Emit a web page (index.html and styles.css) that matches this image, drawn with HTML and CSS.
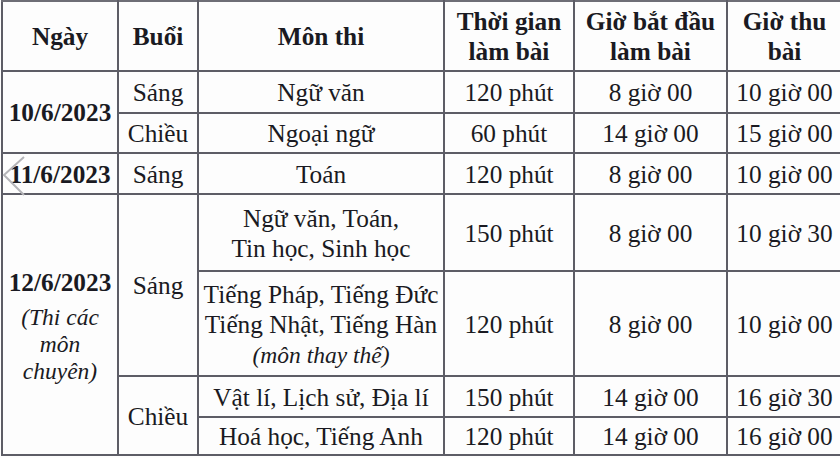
FILE: index.html
```html
<!DOCTYPE html>
<html lang="vi">
<head>
<meta charset="utf-8">
<title>Lịch thi</title>
<link rel="stylesheet" href="styles.css">
</head>
<body>
<div class="wrap">
<table class="schedule">
  <colgroup>
    <col class="c-day"><col class="c-session"><col class="c-subject"><col class="c-dur"><col class="c-start"><col class="c-end">
  </colgroup>
  <tr class="r-head">
    <th>Ngày</th><th>Buổi</th><th>Môn thi</th><th>Thời gian<br>làm bài</th><th>Giờ bắt đầu<br>làm bài</th><th>Giờ thu<br>bài</th>
  </tr>
  <tr class="r-a">
    <td rowspan="2" class="day">10/6/2023</td><td>Sáng</td><td>Ngữ văn</td><td>120 phút</td><td>8 giờ 00</td><td>10 giờ 00</td>
  </tr>
  <tr class="r-b">
    <td>Chiều</td><td>Ngoại ngữ</td><td>60 phút</td><td>14 giờ 00</td><td>15 giờ 00</td>
  </tr>
  <tr class="r-c">
    <td class="day">11/6/2023</td><td>Sáng</td><td>Toán</td><td>120 phút</td><td>8 giờ 00</td><td>10 giờ 00</td>
  </tr>
  <tr class="r-d">
    <td rowspan="4" class="day"><div class="date">12/6/2023</div><div class="note">(Thi các<br>môn<br>chuyên)</div></td>
    <td rowspan="2">Sáng</td><td class="multi">Ngữ văn, Toán,<br>Tin học, Sinh học</td><td>150 phút</td><td>8 giờ 00</td><td>10 giờ 30</td>
  </tr>
  <tr class="r-e">
    <td class="multi">Tiếng Pháp, Tiếng Đức<br>Tiếng Nhật, Tiếng Hàn<br><span class="alt">(môn thay thế)</span></td><td>120 phút</td><td>8 giờ 00</td><td>10 giờ 00</td>
  </tr>
  <tr class="r-f">
    <td rowspan="2">Chiều</td><td>Vật lí, Lịch sử, Địa lí</td><td>150 phút</td><td>14 giờ 00</td><td>16 giờ 30</td>
  </tr>
  <tr class="r-g">
    <td>Hoá học, Tiếng Anh</td><td>120 phút</td><td>14 giờ 00</td><td>16 giờ 00</td>
  </tr>
</table>
<svg class="nav-prev" width="26" height="42" viewBox="0 0 26 42" aria-hidden="true">
  <polyline points="22,2 2,20 22,40" fill="none" stroke="#b4b4b8" stroke-width="2"/>
</svg>
</div>
</body>
</html>
```

FILE: styles.css
```css
html, body {
  margin: 0;
  padding: 0;
  background: #fdfdfd;
  overflow: hidden;
}
.wrap {
  position: relative;
  padding: 0 0 0 1px;
  width: 840px;
  height: 458px;
}
.schedule {
  border-collapse: collapse;
  table-layout: fixed;
  width: 840px;
  font-family: "Liberation Serif", "Times New Roman", serif;
  font-size: 25.3px;
  color: #1a1a22;
}
.c-day { width: 116px; }
.c-session { width: 80px; }
.c-subject { width: 246px; }
.c-dur { width: 130px; }
.c-start { width: 153px; }
.c-end { width: 115px; }
.schedule th, .schedule td {
  border: 2px solid #5d5d66;
  padding: 0;
  text-align: center;
  vertical-align: middle;
  line-height: 30px;
  white-space: nowrap;
}
.schedule th { font-weight: bold; }
.schedule tr:first-child th { border-top-color: #6e6e76; }
.day { font-weight: bold; }
.r-head { height: 70px; }
.r-a { height: 42px; }
.r-b { height: 40px; }
.r-c { height: 41px; }
.r-d { height: 77px; }
.r-e { height: 105px; }
.r-f { height: 41px; }
.r-g { height: 38px; }
.multi { line-height: 34px; }
.alt {
  font-style: italic;
  font-size: 23.5px;
  line-height: 26px;
}
.date { line-height: 36px; margin-bottom: 4px; }
.note {
  font-weight: normal;
  font-style: italic;
  font-size: 23.5px;
  line-height: 27px;
}
.nav-prev {
  position: absolute;
  left: 2px;
  top: 155px;
}
```
